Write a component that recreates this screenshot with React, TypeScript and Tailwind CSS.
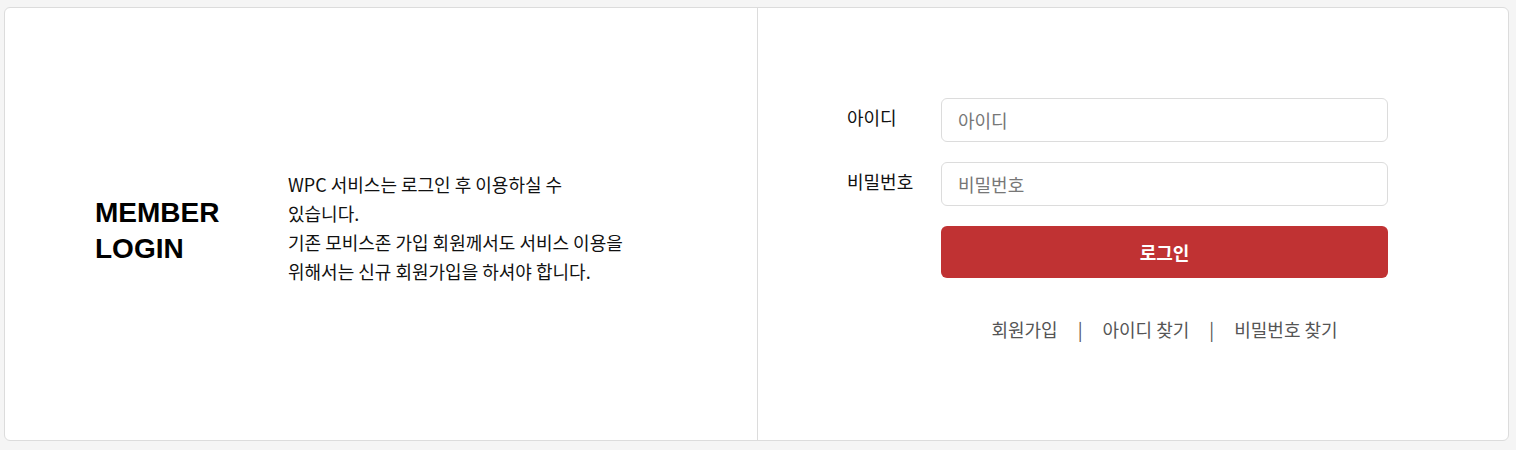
import React from "react";

const font = { fontFamily: '"Noto Sans CJK KR", "Noto Sans", sans-serif' };

export default function App() {
  return (
    <div className="w-[1516px] h-[450px] bg-[#f5f5f5] pt-[7px] pl-[4px]" style={font}>
      <div className="flex w-[1505px] h-[434px] bg-white border border-[#dcdcdc] rounded-[6px]">
        <div className="w-[752px] shrink-0 flex items-center pl-[90px] pt-[8px]">
          <h1
            className="w-[193px] shrink-0 flex flex-col pt-[5px] text-[28px] leading-[36px] font-bold text-black"
            style={{ fontFamily: '"Liberation Sans", Arial, sans-serif' }}
          >
            <span className="block h-[36px]">MEMBER</span>
            <span className="block h-[36px]">LOGIN</span>
          </h1>
          <p className="text-[18px] leading-[29px] text-[#111]">
            WPC 서비스는 로그인 후 이용하실 수
            <br />
            있습니다.
            <br />
            기존 모비스존 가입 회원께서도 서비스 이용을
            <br />
            위해서는 신규 회원가입을 하셔야 합니다.
          </p>
        </div>
        <div className="flex-1 border-l border-[#dcdcdc] pl-[89px] pt-[90px]">
          <div className="w-[541px] flex flex-col gap-[20px]">
            <div className="flex items-start">
              <label className="w-[94px] pt-[7px] text-[18px] leading-[24px] text-[#111]">아이디</label>
              <input
                className="w-[447px] h-[44px] border border-[#dcdcdc] rounded-[6px] px-[16px] text-[18px] text-[#333] placeholder:text-[#777] outline-none"
                placeholder="아이디"
              />
            </div>
            <div className="flex items-start">
              <label className="w-[94px] pt-[7px] text-[18px] leading-[24px] text-[#111]">비밀번호</label>
              <input
                type="password"
                className="w-[447px] h-[44px] border border-[#dcdcdc] rounded-[6px] px-[16px] text-[18px] text-[#333] placeholder:text-[#777] outline-none"
                placeholder="비밀번호"
              />
            </div>
            <div className="pl-[94px]">
              <button className="w-[447px] h-[52px] rounded-[6px] bg-[#c03233] text-white text-[18px] font-bold">
                로그인
              </button>
            </div>
            <div className="pl-[94px] pt-[19px]">
              <div className="w-[447px] flex justify-center items-center text-[18px] leading-[24px] text-[#555]">
                <span>회원가입</span>
                <span className="px-[20px] text-[#555]">|</span>
                <span>아이디 찾기</span>
                <span className="px-[20px] text-[#555]">|</span>
                <span>비밀번호 찾기</span>
              </div>
            </div>
          </div>
        </div>
      </div>
    </div>
  );
}
